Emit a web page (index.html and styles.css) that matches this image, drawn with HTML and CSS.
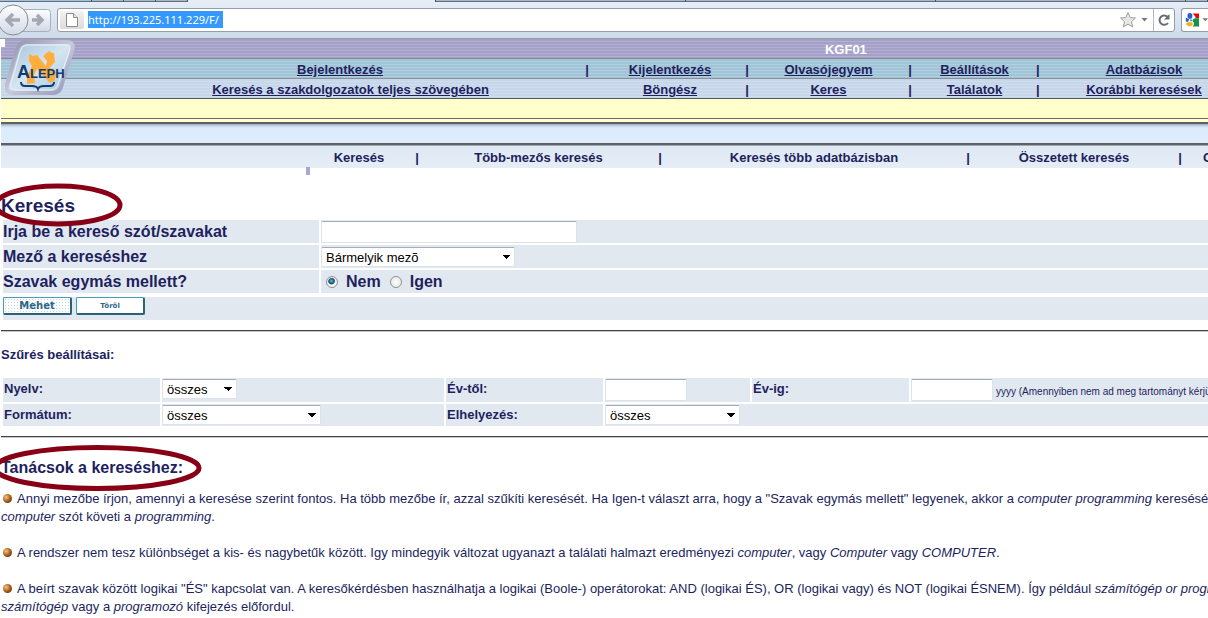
FILE: index.html
```html
<!DOCTYPE html>
<html lang="hu">
<head>
<meta charset="utf-8">
<title>Aleph - Keresés</title>
<link rel="stylesheet" href="styles.css">
</head>
<body>
<header class="browser">
  <div class="tabs"><i class="tab first"></i><i class="tab small"></i><i class="tab small"></i><i class="tab small"></i><i class="active"></i><i class="tab"></i><i class="tab"></i><i class="tab"></i><i class="tab last"></i></div>
  <div class="toolbar">
    <svg class="history" width="54" height="36" viewBox="0 0 54 36" role="img" aria-label="Vissza és előre">
      <defs><linearGradient id="btn" x1="0" y1="0" x2="0" y2="1"><stop offset="0" stop-color="#fdfdfe"/><stop offset="1" stop-color="#d3dae6"/></linearGradient></defs>
      <rect x="14.500" y="7.500" width="36" height="22" rx="3" fill="url(#btn)" stroke="#a6afbd"/>
      <circle cx="13" cy="18" r="15" fill="url(#btn)" stroke="#858b94"/>
      <path d="M20 18H8M13 12L7 18L13 24" fill="none" stroke="#a3a9b1" stroke-width="3.500"/>
      <path d="M32 18H41M37 13L42 18L37 23" fill="none" stroke="#a3a9b1" stroke-width="3.500"/>
    </svg>
    <div class="urlbar">
      <span class="identity"><svg width="14" height="16" viewBox="0 0 14 16"><path d="M1.500 1.500h7l4 4v9h-11z" fill="#fff" stroke="#8b8b8b"/><path d="M8.500 1.500v4h4" fill="#eee" stroke="#8b8b8b"/></svg></span>
      <input class="address" type="text" aria-label="Cím" value="http://193.225.111.229/F/">
      <svg class="star" width="18" height="18" viewBox="0 0 18 18"><path d="M9 1.500l2.200 5 5.300.500-4 3.600 1.200 5.400L9 13.200 4.300 16l1.200-5.400-4-3.600 5.300-.500z" fill="#e6e6e6" stroke="#a0a0a0"/></svg>
      <svg class="drop" width="7" height="4" viewBox="0 0 7 4"><path d="M0.500 0h6l-3 3.500z" fill="#777"/></svg>
      <button class="reload" type="button" aria-label="Újratöltés"><svg width="14" height="14" viewBox="0 0 14 14"><path d="M10.500 3.700A4.700 4.700 0 1 0 11 10" fill="none" stroke="#686d74" stroke-width="2"/><path d="M12.500 1v5.500H7z" fill="#686d74"/></svg></button>
    </div>
    <div class="search">
      <svg width="28" height="18" viewBox="0 0 28 18"><path d="M9 1h8v6h-4c0-3-2-4-4-6z" fill="#f00000"/><path d="M10 8c2-1 3-1 7-1v10H9c3-2 2-5 0-7z" fill="#159447"/><path d="M1 6l4 2-1 3H1z" fill="#2662cc"/><ellipse cx="6" cy="4" rx="3" ry="3.500" fill="#2662cc"/><ellipse cx="5.500" cy="14" rx="4" ry="2.500" fill="#f5b21a"/><path d="M6 8l3 1-2 2z" fill="#2662cc"/><path d="M21 7h7l-3 3.500z" fill="#777"/></svg>
    </div>
  </div>
</header>

<div class="page">
  <div class="banner">
    <svg class="logo" width="74" height="59" viewBox="0 0 74 59" role="img" aria-label="Aleph">
      <defs>
        <linearGradient id="rim" x1="0" y1="0" x2="1" y2="1"><stop offset="0" stop-color="#8e8fab"/><stop offset=".5" stop-color="#c9c8dc"/><stop offset="1" stop-color="#9496b5"/></linearGradient>
        <linearGradient id="face" x1="0" y1="0" x2="1" y2="1"><stop offset="0" stop-color="#9fbfd6"/><stop offset=".5" stop-color="#d5e5f1"/><stop offset="1" stop-color="#9fc4dc"/></linearGradient>
      </defs>
      <path d="M22 3H61Q70 3 67 12L56 48Q54 54 47 54H10Q0 54 2 46L12 11Q14 3 22 3Z" fill="url(#face)" stroke="url(#rim)" stroke-width="4"/>
      <path d="M23 6H59Q67 6 64 13L53 45Q51 51 46 51H13Q4 51 6 45L15 13Q17 6 23 6Z" fill="none" stroke="#edf3f8" stroke-width="1"/>
      <path d="M24 15l4 2 4-1 9 11 1-5-4-5 6-5 3 2 2 0 1 9-5 5 3 4 3 1-1 8-5 3-13-14-3 6 1 8-8 1 0-8 5-10-3-5z" fill="#ffad3c"/>
      <text x="12" y="39" class="logo-text"><tspan class="logo-cap">A</tspan>LEPH</text>
      <path d="M16 43q0 4 4 4h7q5 0 6 3q1-3 6-3h6q4 0 4-4" fill="none" stroke="#123c72" stroke-width="2"/>
    </svg>
    <div class="base">KGF01</div>
    <nav class="row top">
      <a href="#">Bejelentkezés</a><span>|</span><a href="#">Kijelentkezés</a><span>|</span><a href="#">Olvasójegyem</a><span>|</span><a href="#">Beállítások</a><span>|</span><a href="#">Adatbázisok</a>
    </nav>
    <nav class="row second">
      <a href="#">Keresés a szakdolgozatok teljes szövegében</a><span></span><a href="#">Böngész</a><span>|</span><a href="#">Keres</a><span>|</span><a href="#">Találatok</a><span>|</span><a href="#">Korábbi keresések</a>
    </nav>
  </div>
  <div class="notice"></div>
  <div class="strip"></div>
  <nav class="modes">
    <a class="current" href="#">Keresés</a><span>|</span><a href="#">Több-mezős keresés</a><span>|</span><a href="#">Keresés több adatbázisban</a><span>|</span><a href="#">Összetett keresés</a><span>|</span><a href="#">C</a>
  </nav>

  <main>
    <h1><span class="circled">Keresés<svg class="ring" width="132" height="46" viewBox="0 0 132 46"><ellipse cx="66" cy="22" rx="62" ry="19" /></svg></span></h1>
    <form>
      <div class="query">
        <label class="cell" for="word">Irja be a kereső szót/szavakat</label>
        <div class="cell"><input class="text wide" id="word" type="text"></div>
        <label class="cell" for="field">Mező a kereséshez</label>
        <div class="cell"><select class="field" id="field"><option>Bármelyik mezõ</option></select></div>
        <div class="cell" id="adj">Szavak egymás mellett?</div>
        <div class="cell radios" role="radiogroup" aria-labelledby="adj"><label><input type="radio" name="adj" checked>Nem</label><label><input type="radio" name="adj">Igen</label></div>
      </div>
      <div class="actions"><button class="go" type="submit">Mehet</button><button class="clear" type="reset">Töröl</button></div>
      <hr>
      <h2>Szűrés beállításai:</h2>
      <div class="filters">
        <label class="cell" for="lang">Nyelv:</label>
        <div class="cell"><select class="short" id="lang"><option>összes</option></select></div>
        <label class="cell" for="from">Év-től:</label>
        <div class="cell"><input class="text year" id="from" type="text"></div>
        <label class="cell" for="to">Év-ig:</label>
        <div class="cell"><input class="text year" id="to" type="text"><small>yyyy (Amennyiben nem ad meg tartományt kérjük</small></div>
        <label class="cell" for="format">Formátum:</label>
        <div class="cell"><select class="long" id="format"><option>összes</option></select></div>
        <label class="cell" for="place">Elhelyezés:</label>
        <div class="cell rest"><select class="medium" id="place"><option>összes</option></select></div>
      </div>
      <hr>
    </form>
    <h3><span class="circled">Tanácsok a kereséshez:<svg class="ring" width="214" height="50" viewBox="0 0 214 50"><ellipse cx="107" cy="25" rx="102" ry="20.500" /></svg></span></h3>
    <p><i class="dot"></i>Annyi mezőbe írjon, amennyi a keresése szerint fontos. Ha több mezőbe ír, azzal szűkíti keresését. Ha Igen-t választ arra, hogy a "Szavak egymás mellett" legyenek, akkor a <em>computer programming</em> keresésénél<br><em>computer</em> szót követi a <em>programming</em>.</p>
    <p><i class="dot"></i>A rendszer nem tesz különbséget a kis- és nagybetűk között. Igy mindegyik változat ugyanazt a találati halmazt eredményezi <em>computer</em>, vagy <em>Computer</em> vagy <em>COMPUTER</em>.</p>
    <p><i class="dot"></i>A beírt szavak között logikai "ÉS" kapcsolat van. A keresőkérdésben használhatja a logikai (Boole-) operátorokat: AND (logikai ÉS), OR (logikai vagy) és NOT (logikai ÉSNEM). Így például <em>számítógép or programozó</em><br><em>számítógép</em> vagy a <em>programozó</em> kifejezés előfordul.</p>
  </main>
</div>
</body>
</html>
```
FILE: styles.css
```css
* { box-sizing: border-box; }
body {
  margin: 0;
  overflow: hidden;
  background: #fff;
  color: #221f5e;
  font: 13px/18px "Liberation Sans", Arial, sans-serif;
}
a { color: inherit; }

/* Browser chrome */
.tabs { display: flex; height: 2px; background: #e6edf6; }
.tab { width: 250px; background: #a9b5c4; border-right: 1px solid #3c5064; border-bottom: 1px solid #5f7080; }
.tab.first { width: 92px; background: #9fc0dc; }
.tab.small { width: 32px; }
.tab.last { flex: 1; }
.active { width: 248px; border-right: 1px solid #3c5064; }
.toolbar {
  display: flex;
  align-items: center;
  height: 37px;
  padding-bottom: 1px;
  background: linear-gradient(#e6edf6, #cedaea);
  border-bottom: 1px solid #9b9c9e;
}
.history { flex: none; }
.urlbar {
  display: flex;
  align-items: center;
  flex: 1;
  height: 24px;
  margin: 0 6px 0 3px;
  background: #fff;
  border: 1px solid #959dab;
  border-radius: 3px;
}
.identity {
  display: flex;
  align-items: center;
  justify-content: center;
  width: 24px;
  height: 18px;
  margin: 0 4px 0 2px;
  border-radius: 2px;
  background: linear-gradient(#f2f2f2, #dcdcdc);
}
.address {
  width: 135px;
  height: 17px;
  padding: 0;
  border: 0;
  background: #3399ff;
  color: #fff;
  font: 11px/17px "Noto Sans", sans-serif;
}
.star { margin-left: auto; }
.drop { margin: 0 5px 0 4px; }
.reload {
  display: flex;
  align-items: center;
  width: 21px;
  height: 22px;
  padding: 0 3px;
  border: 0;
  border-left: 1px solid #b4bac4;
  background: none;
}
.search {
  display: flex;
  align-items: center;
  width: 27px;
  height: 24px;
  padding-left: 3px;
  overflow: hidden;
  background: #fff;
  border: 1px solid #959dab;
  border-right: 0;
  border-radius: 3px 0 0 3px;
}

/* Banner */
.page { padding-left: 1px; white-space: nowrap; }
.banner { position: relative; font-weight: bold; text-align: center; }
.logo { position: absolute; left: 4px; top: 0; }
.logo-text { fill: #123c72; font-size: 13px; font-weight: bold; text-anchor: start; }
.logo-cap { font-size: 18px; }
.base {
  height: 20px;
  padding: 2px 0 0 40%;
  color: #fff;
  line-height: 18px;
  background: linear-gradient(#fff, #fff) 0 0 / 4px 8px no-repeat, repeating-linear-gradient(#a3a1ca 0 2px, #b3b0d0 2px 3px);
  border-bottom: 1px solid #87868d;
}
.row {
  display: grid;
  grid-template-columns: 467fr 6px 154fr 6px 157fr 6px 123fr 38px 134px;
  height: 20px;
  padding-left: 116px;
  line-height: 22px;
  border-bottom: 1px solid #8b8f98;
}
.row a:nth-child(3) { padding-left: 6px; }
.row a:last-child { padding-left: 6px; }
.row span:nth-child(8) { text-align: left; }
.top a:first-child { padding-right: 21px; }
.top { background: repeating-linear-gradient(#a3c4d8 0 2px, #acd0dd 2px 3px); }
.second { background: repeating-linear-gradient(#c7d7e9 0 2px, #cfdeee 2px 3px); border-color: #555863; }
.notice {
  height: 23px;
  background: linear-gradient(#ffffcc 19px, #6d6d68 19px 20px, #ffffcc 20px);
}
.strip {
  height: 23px;
  background: linear-gradient(#9aa6b6, #c6d7ea 2px, #dcecfc 4px);
  border-top: 2px solid #5d6166;
  border-bottom: 2px solid #5d6166;
}
.modes {
  display: grid;
  grid-template-columns: 110fr 6px 237fr 6px 302fr 6px 206fr 6px 25px;
  height: 23px;
  padding-left: 303px;
  font-weight: bold;
  line-height: 26px;
  text-align: center;
  background: linear-gradient(#a2a9b3 1px, #dfe9f5 1px, #e5edf5);
}
.modes a { text-decoration: none; }
.modes a:last-child { padding-left: 20px; text-align: left; overflow: hidden; }
.modes .current { position: relative; }
.modes .current::before {
  content: "";
  position: absolute;
  left: 2px;
  bottom: -4px;
  width: 4px;
  height: 8px;
  background: #aaa8d0;
}

/* Search form */
h1, h2, h3, p { margin: 0; }
h1 { padding-top: 26px; font-size: 19px; line-height: 24px; }
.circled { position: relative; }
.ring { position: absolute; top: 50%; left: 50%; transform: translate(-50%, -50%); fill: none; stroke: #880015; stroke-width: 5; overflow: visible; }
h1 .ring { margin-left: 20px; }
h3 .ring { margin-left: 5px; }
.query, .filters { display: grid; gap: 2px; padding-left: 2px; margin-top: 2px; }
.query { grid-template-columns: 316px 1fr; grid-auto-rows: 23px; font-size: 16px; line-height: 24px; font-weight: bold; }
.cell { background: #e1e8f0; min-width: 0; overflow: hidden; }
.text, select {
  display: block;
  border: 1px solid #dce2ea;
  border-top-color: #a5abb4;
  border-radius: 2px;
  background-color: #fff;
  color: #000;
  font: 13px "Liberation Sans", Arial, sans-serif;
}
.text { height: 22px; margin-top: 1px; padding: 0 3px; }
.wide { width: 256px; }
select {
  appearance: none;
  height: 20px;
  margin-top: 1px;
  padding: 0 20px 0 4px;
  background-image: conic-gradient(from -45deg at 50% 100%, transparent 0), conic-gradient(from -45deg at 50% 100%, #000 90deg, transparent 0);
  background-size: 8px 4px;
  background-position: right 4px center;
  background-repeat: no-repeat;
}
.query select { margin-top: 2px; }
.field { width: 194px; }
.short { width: 75px; }
.long { width: 159px; }
.medium { width: 135px; }
.radios label { display: inline-flex; align-items: center; height: 24px; }
.radios input {
  appearance: none;
  width: 12px;
  height: 12px;
  margin: 0 8px 0 5px;
  border: 1px solid #8e8f8f;
  border-radius: 50%;
  background: radial-gradient(#fff, #ddd);
  box-shadow: inset 0 0 0 1px #f4f4f4;
}
.radios label + label input { margin-left: 9px; }
.radios input:checked { background: radial-gradient(circle at 45% 40%, #5fc3ec 0, #16456d 35%, #f4f4f4 48%); }
.actions { display: flex; gap: 4px; height: 23px; margin: 4px 0 0 2px; background: #e1e8f0; }
button { font-family: "DejaVu Sans", sans-serif; }
.actions button {
  width: 69px;
  height: 18px;
  padding: 0;
  border: 1px solid #4a9bb5;
  border-right: 2px solid #2a6279;
  border-bottom: 2px solid #2a6279;
  border-radius: 2px;
  background: #fff;
  color: #2d6688;
  font-weight: bold;
}
.actions .go { background: radial-gradient(circle, #b9d6ec 1px, transparent 1px) 0 0 / 3px 3px #fff; font-size: 10px; }
.actions .clear { font-size: 7px; }
hr { height: 2px; margin: 10px 0 0; border: 0; border-top: 1px solid #444; border-bottom: 1px solid #c8c8c8; }
h2 { margin-top: 14px; font-size: 13px; line-height: 18px; }
.filters { grid-template-columns: 157px 282px 157px 145px 157px 1fr; grid-template-rows: 24px 22px; margin-top: 14px; }
.filters label { padding-left: 1px; font-weight: bold; line-height: 22px; }
.filters .rest { grid-column: span 3; }
.filters .year { width: 82px; }
.filters .cell:has(small) { display: flex; align-items: flex-start; }
.filters small { margin-left: 3px; font-size: 10px; line-height: 28px; }

/* Tips */
h3 { margin-top: 18px; font-size: 16px; line-height: 24px; }
p { margin-bottom: 18px; }
h3 + p { margin-top: 10px; }
.dot {
  display: inline-block;
  width: 9px;
  height: 9px;
  margin: 0 5px 0 2px;
  border-radius: 50%;
  background: radial-gradient(circle at 35% 35%, #ffc080, #a8601c 50%, #2e1604);
}
```
